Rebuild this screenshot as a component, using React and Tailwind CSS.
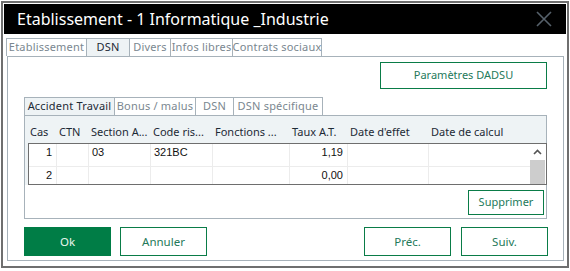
const ui = { fontFamily: '"Noto Sans", "Open Sans", sans-serif' };
const cell = { fontFamily: '"Liberation Sans", Arial, sans-serif' };

const outerTabs = ["Etablissement", "DSN", "Divers", "Infos libres", "Contrats sociaux"];
const innerTabs = ["Accident Travail", "Bonus / malus", "DSN", "DSN spécifique"];

const cols = [
  { label: "Cas", w: 29 },
  { label: "CTN", w: 32 },
  { label: "Section A...", w: 62 },
  { label: "Code ris...", w: 62 },
  { label: "Fonctions ...", w: 77 },
  { label: "Taux A.T.", w: 58 },
  { label: "Date d'effet", w: 81 },
  { label: "Date de calcul", w: 101 },
];

const rows = [
  ["1", "", "03", "321BC", "", "1,19", "", ""],
  ["2", "", "", "", "", "0,00", "", ""],
];

function Tab({ label, active, w }) {
  return (
    <div
      className={`flex h-[18px] items-center justify-center whitespace-nowrap border border-b-0 border-[#a7b2ba] -ml-px first:ml-0 text-[11px] tracking-[0.2px] ${
        active ? "bg-[#eef3f5] text-[#1d2a36]" : "bg-white text-[#7a8790]"
      }`}
      style={{ width: w }}
    >
      {label}
    </div>
  );
}

export default function App() {
  return (
    <div className="h-[271px] w-[570px] bg-white" style={ui}>
      <div className="ml-px mt-px h-[267px] w-[568px] border-2 border-[#6f6f6f] p-px">
        <div className="flex h-[30px] items-center justify-between bg-black pl-[13px] pr-[14px]">
          <span className="text-[16px] leading-none text-white">Etablissement - 1 Informatique _Industrie</span>
          <svg width="16" height="16" viewBox="0 0 16 16">
            <path d="M1 1 L15 15 M15 1 L1 15" stroke="#56616b" strokeWidth="1.6" />
          </svg>
        </div>

        <div className="mt-[4px] flex pl-[2px]">
          {outerTabs.map((t, i) => (
            <Tab key={t} label={t} active={i === 1} w={[81, 44, 42, 63, 90][i]} />
          ))}
        </div>

        <div className="ml-[3px] flex h-[205px] w-[557px] flex-col border border-[#a7b2ba] pl-[16px] pr-[15px] pt-[5px]">
          <div className="flex justify-end pr-px">
            <button className="h-[27px] w-[167px] border border-[#0a7c48] text-[11px] text-[#24795a]">
              Paramètres DADSU
            </button>
          </div>

          <div className="mt-[8px] flex">
            {innerTabs.map((t, i) => (
              <Tab key={t} label={t} active={i === 0} w={[91, 82, 39, 90][i]} />
            ))}
          </div>

          <div className="flex h-[104px] w-[523px] flex-col border border-[#a7b2ba]">
            <div className="bg-[#eef3f5] pl-[3px] pt-[5px]">
              <div className="flex h-[22px] items-center text-[11px] text-[#1d2a36]">
                {cols.map((c) => (
                  <div key={c.label} className="pl-[2px] whitespace-nowrap" style={{ width: c.w }}>
                    {c.label}
                  </div>
                ))}
              </div>
            </div>
            <div className="bg-[#eef3f5] pl-[3px]">
              <div className="flex h-[42px] w-[519px] border border-[#6e6e6e] bg-white">
                <div className="flex flex-col text-[11px] text-[#111]" style={cell}>
                  {rows.map((r, ri) => (
                    <div key={ri} className={`flex ${ri === 0 ? "h-[23px] border-b border-[#ececec]" : "h-[17px]"}`}>
                      {r.map((v, ci) => (
                        <div
                          key={ci}
                          className={`flex items-center border-r border-[#ececec] ${
                            ci === 0 || ci === 5 ? "justify-end pr-[4px]" : "pl-[3px]"
                          } ${ri === 0 ? "pb-[6px]" : ""}`}
                          style={{ width: ci === 0 ? 28 : cols[ci].w, borderRightWidth: ci === 7 ? 0 : 1 }}
                        >
                          {v}
                        </div>
                      ))}
                    </div>
                  ))}
                </div>
                <div className="flex w-[15px] flex-col">
                  <div className="flex h-[16px] items-center justify-center">
                    <svg width="9" height="6" viewBox="0 0 9 6">
                      <path d="M1 5 L4.5 1.5 L8 5" stroke="#555" strokeWidth="1.6" fill="none" />
                    </svg>
                  </div>
                  <div className="flex-1 bg-[#cdcdcd]" />
                </div>
              </div>
            </div>
            <div className="flex flex-1 items-end justify-end bg-white pb-[3px] pr-[2px]">
              <button className="h-[25px] w-[76px] border border-[#0a7c48] text-[11px] text-[#24795a]">
                Supprimer
              </button>
            </div>
          </div>

          <div className="mt-[8px] flex items-center">
            <button className="h-[29px] w-[87px] bg-[#007d46] text-[11.5px] text-[#e9f5ee]">Ok</button>
            <button className="ml-[9px] h-[29px] w-[87px] border border-[#0a7c48] text-[11.5px] text-[#24795a]">
              Annuler
            </button>
            <div className="flex-1" />
            <button className="h-[29px] w-[87px] border border-[#0a7c48] text-[11.5px] text-[#24795a]">
              Préc.
            </button>
            <button className="ml-[10px] h-[29px] w-[87px] border border-[#0a7c48] text-[11.5px] text-[#24795a]">
              Suiv.
            </button>
          </div>
        </div>
      </div>
    </div>
  );
}
